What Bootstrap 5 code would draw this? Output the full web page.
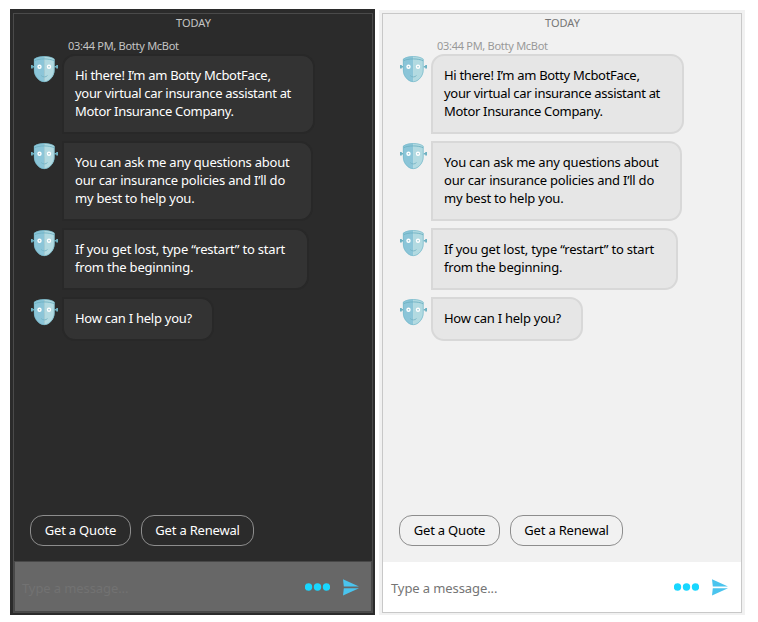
<!DOCTYPE html>
<html lang="en">
<head>
<meta charset="utf-8">
<meta name="viewport" content="width=device-width, initial-scale=1">
<title>Chat themes</title>
<link href="https://cdn.jsdelivr.net/npm/bootstrap@5.3.0/dist/css/bootstrap.min.css" rel="stylesheet">
<style>
body { font-family: "Noto Sans", "Open Sans", sans-serif; font-size: 13px; line-height: 18px; background: #fff; overflow: hidden; }
.themes { padding: 9px 0 0 10px; gap: 4px; }
.chat { width: 365px; height: 606px; padding: 4px 2px 2px 3px; }
.chat-light { width: 366px; height: 605px; margin-top: 1px; padding: 3px 3px 2px; }
.chat-dark { background: #2b2b2b; color: #fff; --edge: #4a4a4a; --bub: #333; --bub-edge: #282828; --muted: #c4c4c4; --day: #c4c4c4; --field: #676767; --hint: #727272; }
.chat-light { background: #f1f1f1; color: #000; --edge: #c8c8c8; --bub: #e6e6e6; --bub-edge: #d8d8d8; --muted: #999; --day: #767676; --field: #fff; --hint: #757575; }
.chat-frame { width: 360px; height: 600px; border: 1px solid var(--edge); }
.day { font-size: 11px; line-height: 18px; color: var(--day); padding-left: 1px; }
.stamp { font-size: 11px; line-height: 14px; padding: 7px 0 0 54px; color: var(--muted); letter-spacing: -.28px; }
.thread { gap: 7px; padding: 1px 0 0 17px; }
.avatar { width: 27px; height: 27px; margin: 2px 4px 0 0; }
.bubble { padding: 10px 11px 12px; border: 2px solid var(--bub-edge); background: var(--bub); border-radius: 0 13px 13px 0; white-space: nowrap; }
.bubble.first { border-top-left-radius: 13px; width: 253px; letter-spacing: -.31px; }
.bubble.second { width: 251px; letter-spacing: -.22px; }
.bubble.third { width: 247px; letter-spacing: -.2px; }
.bubble.last { border-bottom-left-radius: 13px; width: 152px; letter-spacing: -.26px; }
.choices { gap: 10px; padding: 0 0 16px 16px; }
.chat-dark .choices { padding-bottom: 15px; }
.choice { height: 31px; padding: 0 0 2px; border: 1px solid #8d8d8d; border-radius: 13px; font-size: 13px; line-height: 18px; color: inherit; letter-spacing: -.2px; }
.choice.quote { width: 101px; }
.choice.renew { width: 113px; }
.compose { height: 50px; padding: 0 12px 0 8px; background: var(--field); border: solid var(--field); border-width: 0 1px 1px 0; }
.chat-dark .compose { height: 51px; border: 1px solid #484848; padding: 0 12px 0 7px; }
.hint { color: var(--hint); padding-top: 3px; letter-spacing: -.1px; }
.dots { width: 25px; height: 8px; margin-right: 13px; }
.send { width: 16px; height: 17px; margin-top: 1px; }
</style>
<script src="https://cdn.jsdelivr.net/npm/bootstrap@5.3.0/dist/js/bootstrap.bundle.min.js"></script>
</head>
<body>
<svg class="d-none" aria-hidden="true">
  <symbol id="bot" viewBox="0 0 27 27">
    <path d="M0 9h1.800v1h1.700v1.400H1.800v1H0zM27 9h-1.800v1h-1.700v1.400h1.700v1H27z" fill="#6eb1c2"/>
    <path d="M13.300.2C9 .2 5.500 1 3 3v11c0 3 1 5.600 3 8s4.500 4 7.300 4z" fill="#8bc5d8"/>
    <path d="M13.100.2c4.400 0 7.900.8 10.400 2.800v11c0 3-1 5.600-3 8s-4.600 4-7.400 4z" fill="#b2dae1"/>
    <path d="M3.500 4.800C8 2.300 18.500 2.300 23.200 4.800" fill="none" stroke="#6eb1c2" stroke-width=".9"/>
    <path d="M13.300.5C9 .5 5.800 1.300 3.300 3.200V14c0 3 1 5.500 2.900 7.800s4.400 3.900 7.100 3.900 5.100-1.600 7-3.900 2.900-4.800 2.900-7.800V3.200C20.800 1.300 17.600.5 13.300.5z" fill="none" stroke="#77b9ca" stroke-width=".7"/>
    <circle cx="8.500" cy="10.800" r="2.200" fill="#fff"/><circle cx="8.500" cy="10.800" r=".8" fill="#8fbfca"/>
    <circle cx="18" cy="10.800" r="2.200" fill="#fff"/><circle cx="18" cy="10.800" r=".8" fill="#8fbfca"/>
    <path d="M10.200 19.500c1.600 1.900 4.700 1.900 6.300 0" fill="none" stroke="#77b4c5" stroke-width=".9"/>
  </symbol>
  <symbol id="more" viewBox="0 0 25 8"><g fill="#18d7ff"><circle cx="3.500" cy="4" r="3.700"/><circle cx="12.500" cy="4" r="3.700"/><circle cx="21.500" cy="4" r="3.700"/></g></symbol>
  <symbol id="plane" viewBox="0 0 16 17"><path d="M0 .3 16 7.500H.8zM.8 9.300H16L0 16.500z" fill="#4ac4ee"/></symbol>
</svg>
<main class="themes d-flex align-items-start">
  <section class="chat chat-dark flex-shrink-0">
    <div class="chat-frame d-flex flex-column">
      <div class="day text-center">TODAY</div>
      <div class="stamp">03:44 PM, Botty McBot</div>
      <div class="thread d-flex flex-column">
        <div class="d-flex align-items-start"><svg class="avatar"><use href="#bot"/></svg><div class="bubble first">Hi there! I’m am Botty McbotFace,<br>your virtual car insurance assistant at<br>Motor Insurance Company.</div></div>
        <div class="d-flex align-items-start"><svg class="avatar"><use href="#bot"/></svg><div class="bubble second">You can ask me any questions about<br>our car insurance policies and I’ll do<br>my best to help you.</div></div>
        <div class="d-flex align-items-start"><svg class="avatar"><use href="#bot"/></svg><div class="bubble third">If you get lost, type “restart” to start<br>from the beginning.</div></div>
        <div class="d-flex align-items-start"><svg class="avatar"><use href="#bot"/></svg><div class="bubble last">How can I help you?</div></div>
      </div>
      <div class="choices d-flex mt-auto"><button class="btn choice quote">Get a Quote</button><button class="btn choice renew">Get a Renewal</button></div>
      <div class="compose d-flex align-items-center"><span class="hint me-auto">Type a message...</span><svg class="dots"><use href="#more"/></svg><svg class="send"><use href="#plane"/></svg></div>
    </div>
  </section>
  <section class="chat chat-light flex-shrink-0">
    <div class="chat-frame d-flex flex-column">
      <div class="day text-center">TODAY</div>
      <div class="stamp">03:44 PM, Botty McBot</div>
      <div class="thread d-flex flex-column">
        <div class="d-flex align-items-start"><svg class="avatar"><use href="#bot"/></svg><div class="bubble first">Hi there! I’m am Botty McbotFace,<br>your virtual car insurance assistant at<br>Motor Insurance Company.</div></div>
        <div class="d-flex align-items-start"><svg class="avatar"><use href="#bot"/></svg><div class="bubble second">You can ask me any questions about<br>our car insurance policies and I’ll do<br>my best to help you.</div></div>
        <div class="d-flex align-items-start"><svg class="avatar"><use href="#bot"/></svg><div class="bubble third">If you get lost, type “restart” to start<br>from the beginning.</div></div>
        <div class="d-flex align-items-start"><svg class="avatar"><use href="#bot"/></svg><div class="bubble last">How can I help you?</div></div>
      </div>
      <div class="choices d-flex mt-auto"><button class="btn choice quote">Get a Quote</button><button class="btn choice renew">Get a Renewal</button></div>
      <div class="compose d-flex align-items-center"><span class="hint me-auto">Type a message...</span><svg class="dots"><use href="#more"/></svg><svg class="send"><use href="#plane"/></svg></div>
    </div>
  </section>
</main>
</body>
</html>
